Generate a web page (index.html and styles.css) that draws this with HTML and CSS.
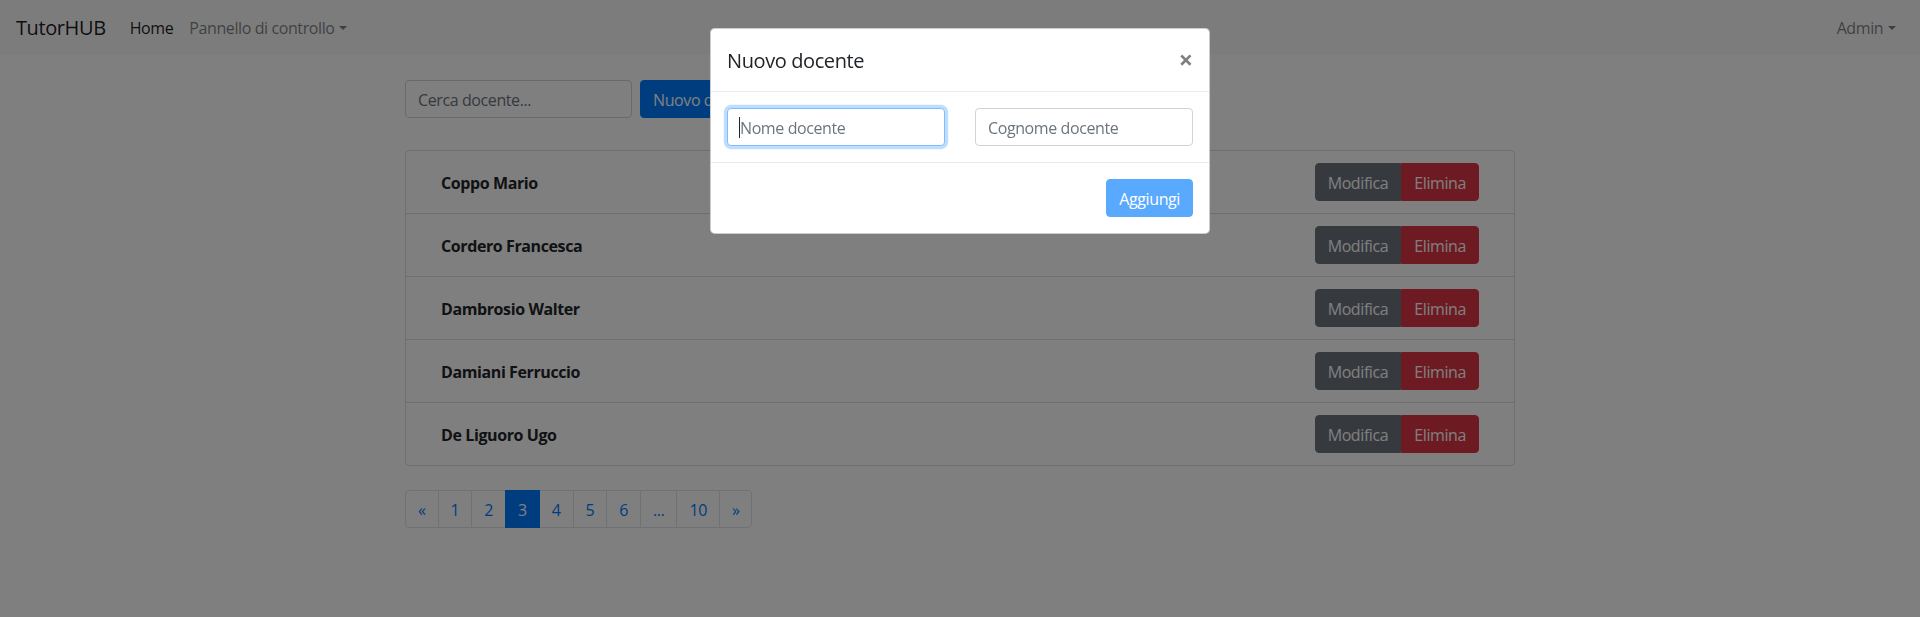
FILE: index.html
```html
<!DOCTYPE html>
<html lang="it">
<head>
<meta charset="utf-8">
<title>TutorHUB - Docenti</title>
<link rel="stylesheet" href="styles.css">
</head>
<body>
<nav class="navbar">
  <a class="brand" href="#">TutorHUB</a>
  <ul class="nav">
    <li><a class="nav-link active" href="#">Home</a></li>
    <li><a class="nav-link dropdown-toggle" href="#">Pannello di controllo</a></li>
  </ul>
  <div class="nav-right">
    <a class="nav-link dropdown-toggle" href="#">Admin</a>
  </div>
</nav>

<main class="container">
  <div class="toolbar">
    <input class="form-control search" type="text" placeholder="Cerca docente...">
    <button class="btn btn-primary" type="button">Nuovo docente</button>
  </div>

  <ul class="list">
    <li class="list-item"><span class="name">Coppo Mario</span><div class="btn-group"><button class="btn btn-secondary">Modifica</button><button class="btn btn-danger">Elimina</button></div></li>
    <li class="list-item"><span class="name">Cordero Francesca</span><div class="btn-group"><button class="btn btn-secondary">Modifica</button><button class="btn btn-danger">Elimina</button></div></li>
    <li class="list-item"><span class="name">Dambrosio Walter</span><div class="btn-group"><button class="btn btn-secondary">Modifica</button><button class="btn btn-danger">Elimina</button></div></li>
    <li class="list-item"><span class="name">Damiani Ferruccio</span><div class="btn-group"><button class="btn btn-secondary">Modifica</button><button class="btn btn-danger">Elimina</button></div></li>
    <li class="list-item"><span class="name">De Liguoro Ugo</span><div class="btn-group"><button class="btn btn-secondary">Modifica</button><button class="btn btn-danger">Elimina</button></div></li>
  </ul>

  <ul class="pagination">
    <li><a class="page-link" href="#">&laquo;</a></li>
    <li><a class="page-link" href="#">1</a></li>
    <li><a class="page-link" href="#">2</a></li>
    <li><a class="page-link active" href="#">3</a></li>
    <li><a class="page-link" href="#">4</a></li>
    <li><a class="page-link" href="#">5</a></li>
    <li><a class="page-link" href="#">6</a></li>
    <li><a class="page-link" href="#">...</a></li>
    <li><a class="page-link" href="#">10</a></li>
    <li><a class="page-link" href="#">&raquo;</a></li>
  </ul>
</main>

<div class="backdrop"></div>

<div class="modal">
  <div class="modal-content">
    <div class="modal-header">
      <h5 class="modal-title">Nuovo docente</h5>
      <button class="close" type="button">&times;</button>
    </div>
    <div class="modal-body">
      <div class="form-row">
        <div class="field">
          <input class="form-control focused" type="text" placeholder="Nome docente">
          <span class="caret"></span>
        </div>
        <div class="field">
          <input class="form-control" type="text" placeholder="Cognome docente">
        </div>
      </div>
    </div>
    <div class="modal-footer">
      <button class="btn btn-primary disabled" type="button">Aggiungi</button>
    </div>
  </div>
</div>
</body>
</html>
```

FILE: styles.css
```css
* { box-sizing: border-box; }

html, body {
  margin: 0;
  padding: 0;
}

body {
  font-family: "Open Sans", "Noto Sans", "Liberation Sans", sans-serif;
  font-size: 16px;
  line-height: 1.5;
  letter-spacing: -0.025em;
  color: #212529;
  background: #fff;
  height: 617px;
  overflow: hidden;
}

a { text-decoration: none; }

ul { list-style: none; margin: 0; padding: 0; }

/* Navbar */
.navbar {
  display: flex;
  align-items: center;
  height: 55px;
  padding: 1px 16px 0;
  background: #f8f9fa;
}

.brand {
  font-size: 20px;
  line-height: 30px;
  color: rgba(0, 0, 0, .9);
  margin-right: 16px;
}

.nav {
  display: flex;
}

.nav-link {
  display: block;
  padding: 8px;
  color: rgba(0, 0, 0, .5);
}

.nav-link.active { color: rgba(0, 0, 0, .9); }

.dropdown-toggle::after {
  content: "";
  display: inline-block;
  margin-left: .3em;
  vertical-align: .255em;
  border-top: .3em solid;
  border-right: .3em solid transparent;
  border-left: .3em solid transparent;
}

.nav-right {
  margin-left: auto;
}

/* Container */
.container {
  width: 1140px;
  margin: 0 auto;
  padding: 25px 15px 0;
}

.toolbar {
  display: flex;
  gap: 8px;
  margin-bottom: 32px;
}

.form-control {
  height: 38px;
  padding: 7px 12px 5px;
  font-family: inherit;
  font-size: 16px;
  line-height: 1.5;
  letter-spacing: inherit;
  color: #495057;
  background: #fff;
  border: 1px solid #ced4da;
  border-radius: 4px;
  outline: none;
}

.form-control::placeholder { color: #6c757d; opacity: 1; }

.search { width: 227px; }

.btn {
  font-family: inherit;
  font-size: 16px;
  line-height: 1.5;
  letter-spacing: inherit;
  padding: 7px 12px 5px;
  border: 1px solid transparent;
  border-radius: 4px;
  cursor: pointer;
}

.btn-primary { background: #007bff; border-color: #007bff; color: #fff; }
.btn-primary.disabled { opacity: .65; }
.btn-secondary { background: #6c757d; border-color: #6c757d; color: #fff; }
.btn-danger { background: #dc3545; border-color: #dc3545; color: #fff; }

/* List */
.list {
  border: 1px solid rgba(0, 0, 0, .125);
  border-radius: 4px;
  margin-bottom: 24px;
}

.list-item {
  display: flex;
  align-items: center;
  justify-content: space-between;
  padding: 12px 35px 12px 35px;
  border-top: 1px solid rgba(0, 0, 0, .125);
}

.list-item:first-child { border-top: 0; }

.name { font-weight: 700; padding-top: 2px; }

.btn-group { display: flex; }
.btn-group .btn:first-child { border-top-right-radius: 0; border-bottom-right-radius: 0; }
.btn-group .btn:last-child { border-top-left-radius: 0; border-bottom-left-radius: 0; }

/* Pagination */
.pagination { display: flex; }

.page-link {
  display: block;
  padding: 9px 12px 7px;
  margin-left: -1px;
  line-height: 1.25;
  color: #007bff;
  background: #fff;
  border: 1px solid #dee2e6;
}

.pagination li:first-child .page-link { margin-left: 0; border-radius: 4px 0 0 4px; }
.pagination li:last-child .page-link { border-radius: 0 4px 4px 0; }

.page-link.active {
  position: relative;
  background: #007bff;
  border-color: #007bff;
  color: #fff;
}

/* Modal */
.backdrop {
  position: fixed;
  inset: 0;
  background: rgba(0, 0, 0, .5);
}

.modal {
  position: fixed;
  top: 28px;
  left: 0;
  right: 0;
  width: 500px;
  margin: 0 auto;
}

.modal-content {
  background: #fff;
  border: 1px solid rgba(0, 0, 0, .2);
  border-radius: 4.8px;
}

.modal-header {
  display: flex;
  align-items: flex-start;
  justify-content: space-between;
  padding: 17px 16px 15px;
  border-bottom: 1px solid #e9ecef;
}

.modal-title {
  margin: 0;
  font-size: 20px;
  font-weight: 400;
  line-height: 1.5;
}

.close {
  padding: 18px 16px 14px;
  margin: -17px -16px -15px auto;
  background: transparent;
  border: 0;
  font-family: inherit;
  font-size: 25px;
  font-weight: 700;
  line-height: 1;
  color: #000;
  opacity: .5;
  text-shadow: 0 1px 0 #fff;
}

.modal-body { padding: 16px; }

.form-row {
  display: flex;
  gap: 30px;
}

.field {
  position: relative;
  flex: 1;
  min-width: 0;
  display: flex;
}

.field .form-control { flex: 1; min-width: 0; }

.form-control.focused {
  border-color: #80bdff;
  box-shadow: 0 0 0 3.2px rgba(0, 123, 255, .25);
}

.caret {
  position: absolute;
  left: 12px;
  top: 9px;
  width: 1px;
  height: 21px;
  background: #212529;
}

.modal-footer {
  display: flex;
  justify-content: flex-end;
  padding: 16px;
  border-top: 1px solid #e9ecef;
}
```
